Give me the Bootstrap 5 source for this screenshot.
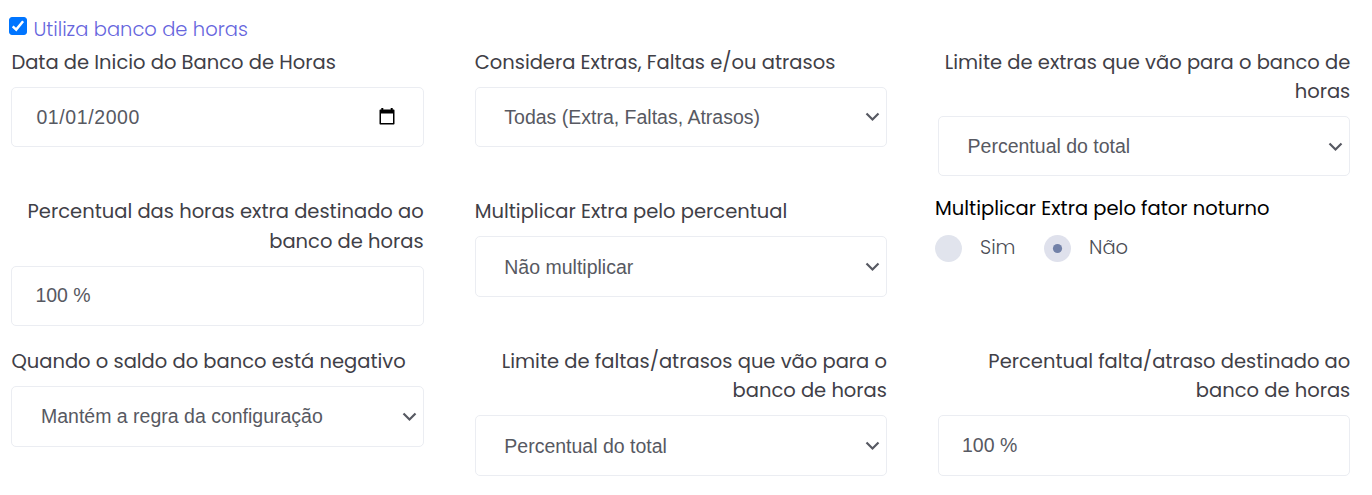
<!DOCTYPE html>
<html lang="pt-BR">
<head>
<meta charset="utf-8">
<meta name="viewport" content="width=device-width, initial-scale=1">
<title>Banco de horas</title>
<link href="https://cdn.jsdelivr.net/npm/bootstrap@5.3.0/dist/css/bootstrap.min.css" rel="stylesheet">
<style>
  body { font-family: Poppins, Inter, sans-serif; font-size: 19.5px; line-height: 29.25px; color: #3f4047; background: #fff; overflow: hidden; }
  .hours-form { padding: 15.2px 21.7px 0 11.4px; }
  .toggle-line { height: 32.5px; gap: 6.4px; margin-left: -2.4px; color: #6665dd; font-weight: 300; }
  .toggle-line .form-check-input { width: 18px; height: 18px; margin: 2px 0 0; border-radius: 3px; }
  .toggle-line .form-check-input:checked { background-color: #0075ff; border-color: #0075ff; background-size: 16px 16px;
    background-image: url("data:image/svg+xml,%3csvg xmlns='http://www.w3.org/2000/svg' viewBox='0 0 16 16'%3e%3cpath fill='none' stroke='%23fff' stroke-width='2.5' d='M2.700 8.300 6.200 11.600 13.100 3.200'/%3e%3c/svg%3e"); }
  .fields { --bs-gutter-x: 51px; }
  .fields > div { height: 149.66px; }
  .form-label { margin-bottom: 9.8px; }
  .field { height: 60.48px; border: 1px solid #ebedf2; border-radius: 5px; color: #575962; background-color: #fff; font-family: "Liberation Sans", Arial, sans-serif; font-size: 19.5px; line-height: 28px; padding: 0 23px; }
  select.field { padding: 0 40px 0 28.6px; background-position: right 6px center; background-size: 15px 15px;
    background-image: url("data:image/svg+xml,%3csvg xmlns='http://www.w3.org/2000/svg' viewBox='0 0 15 15'%3e%3cpath fill='none' stroke='%23575962' stroke-width='2.2' d='M1.5 4.5 7.5 10.5 13.5 4.5'/%3e%3c/svg%3e"); }
  .date-text { letter-spacing: .6px; padding: 1px 24px 0; }
  .date-icon { right: 29px; top: 21px; }
  .radio-group { margin-left: -3px; margin-top: -3px; }
  .radio-group legend { font-size: inherit; line-height: inherit; color: #000; margin-bottom: 9.5px; }
  .radio-group .form-check-input { width: 27px; height: 27px; margin: 2px 18px 0 0; border: 0; background-color: #e1e4ed; }
  .radio-group .form-check-input:checked { background-color: #dfe1ec; background-size: 100%;
    background-image: url("data:image/svg+xml,%3csvg xmlns='http://www.w3.org/2000/svg' viewBox='0 0 27 27'%3e%3ccircle cx='13.5' cy='13.5' r='4.6' fill='%237281a8'/%3e%3c/svg%3e"); }
  .choice { color: #4b4d55; font-weight: 300; margin-right: 28.5px; }
</style>
</head>
<body>
<form class="hours-form container-fluid">
  <label class="toggle-line d-flex"><input class="form-check-input" type="checkbox" checked><span>Utiliza banco de horas</span></label>
  <div class="row fields">
    <div class="col-4">
      <label class="form-label d-block" for="inicio">Data de Inicio do Banco de Horas</label>
      <div class="position-relative">
        <input id="inicio" class="form-control field date-text" value="01/01/2000">
        <svg class="date-icon position-absolute" width="16" height="17" viewBox="0 0 16 17"><path fill="#000" fill-rule="evenodd" d="M2.300 0h2v1.500h7.400V0h2v1.500h.8c.6 0 1 .4 1 1V15.500c0 .6-.4 1-1 1H1.500c-.6 0-1-.4-1-1V2.500c0-.6.4-1 1-1h.8zM2 5.500v9.500h12V5.500z"/></svg>
      </div>
    </div>
    <div class="col-4">
      <label class="form-label d-block" for="considera">Considera Extras, Faltas e/ou atrasos</label>
      <select id="considera" class="form-select field"><option>Todas (Extra, Faltas, Atrasos)</option></select>
    </div>
    <div class="col-4">
      <label class="form-label d-block text-end" for="limiteExtra">Limite de extras que vão para o banco de horas</label>
      <select id="limiteExtra" class="form-select field"><option>Percentual do total</option></select>
    </div>
    <div class="col-4">
      <label class="form-label d-block text-end" for="percExtra">Percentual das horas extra destinado ao banco de horas</label>
      <input id="percExtra" class="form-control field" value="100 %">
    </div>
    <div class="col-4">
      <label class="form-label d-block" for="multiplicar">Multiplicar Extra pelo percentual</label>
      <select id="multiplicar" class="form-select field"><option>Não multiplicar</option></select>
    </div>
    <div class="col-4">
      <fieldset class="radio-group">
        <legend>Multiplicar Extra pelo fator noturno</legend>
        <div class="d-flex">
          <label class="choice d-flex"><input class="form-check-input" type="radio" name="noturno"><span>Sim</span></label>
          <label class="choice d-flex"><input class="form-check-input" type="radio" name="noturno" checked><span>Não</span></label>
        </div>
      </fieldset>
    </div>
    <div class="col-4">
      <label class="form-label d-block" for="saldo">Quando o saldo do banco está negativo</label>
      <select id="saldo" class="form-select field"><option>Mantém a regra da configuração</option></select>
    </div>
    <div class="col-4">
      <label class="form-label d-block text-end" for="limiteFalta">Limite de faltas/atrasos que vão para o banco de horas</label>
      <select id="limiteFalta" class="form-select field"><option>Percentual do total</option></select>
    </div>
    <div class="col-4">
      <label class="form-label d-block text-end" for="percFalta">Percentual falta/atraso destinado ao banco de horas</label>
      <input id="percFalta" class="form-control field" value="100 %">
    </div>
  </div>
</form>
<script src="https://cdn.jsdelivr.net/npm/bootstrap@5.3.0/dist/js/bootstrap.bundle.min.js"></script>
</body>
</html>
